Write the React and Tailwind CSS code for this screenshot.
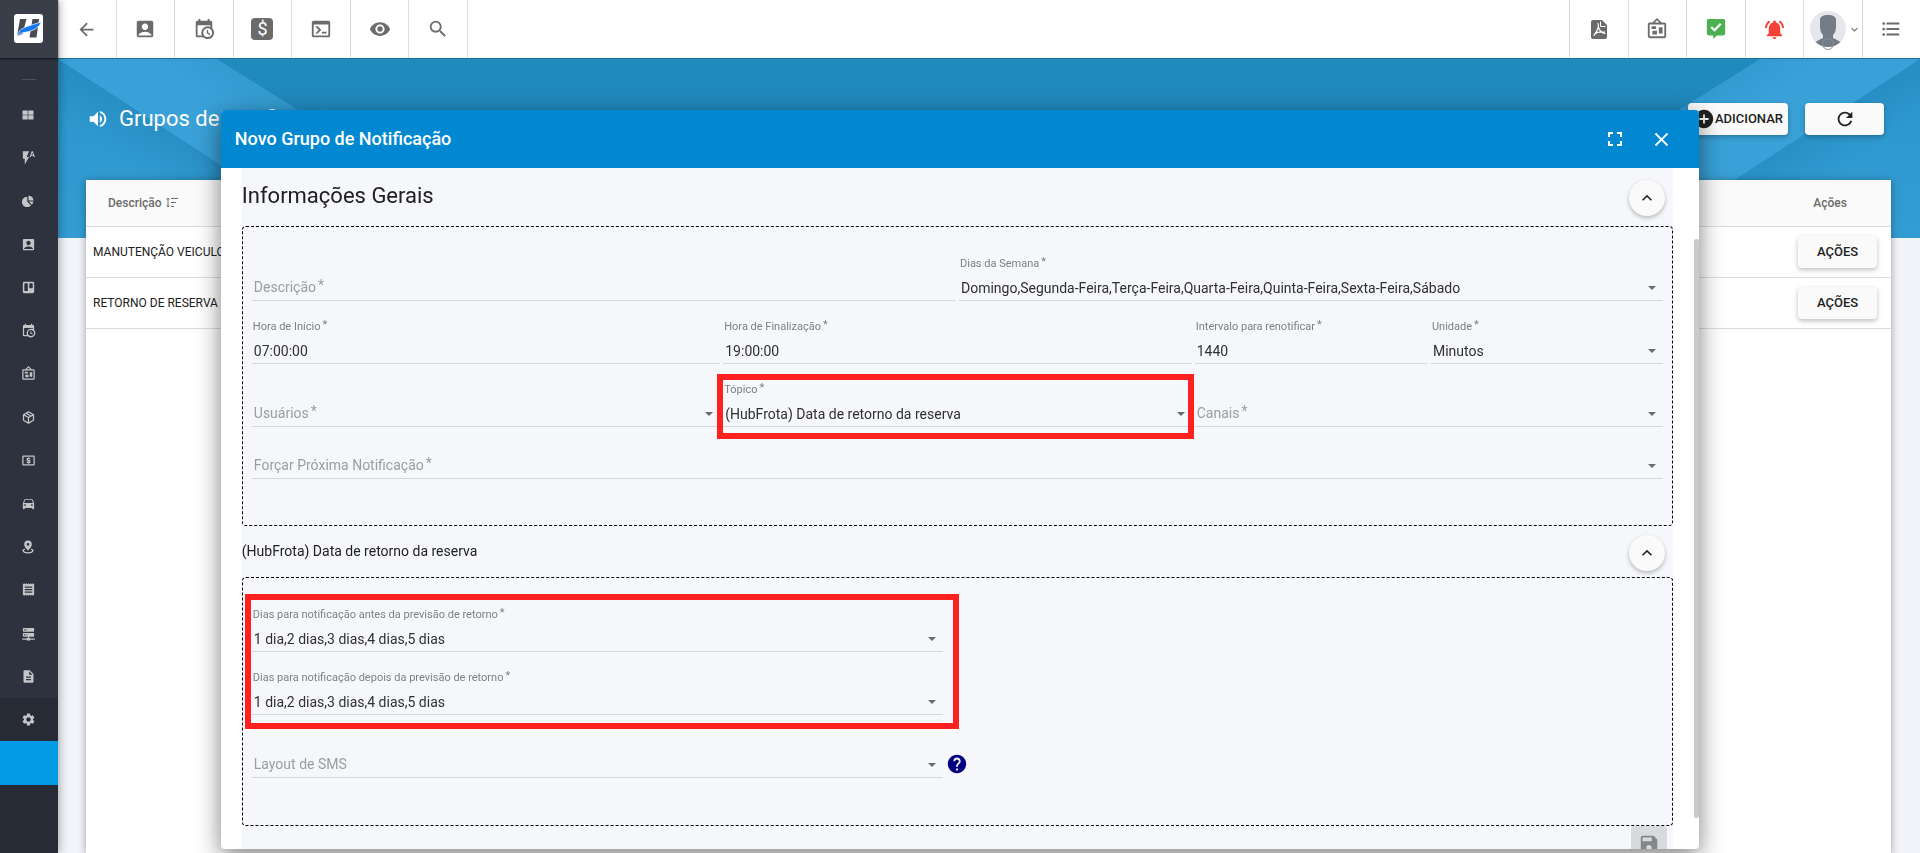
import React from "react";
import {
  MdArrowBack, MdAccountBox, MdVisibility, MdSearch, MdFormatListBulleted, MdFlashAuto,
  MdLocalAtm, MdDirectionsCar, MdReceipt, MdDescription, MdSettings, MdVolumeUp,
  MdAddCircle, MdRefresh, MdFullscreen, MdClose, MdSave, MdHelp, MdNotificationsActive,
  MdKeyboardArrowUp, MdKeyboardArrowDown,
} from "react-icons/md";
import { FaTrello } from "react-icons/fa";

function Glyph({ d, size }) {
  return (
    <svg viewBox="0 0 24 24" width={size} height={size} fill="currentColor" aria-hidden="true">
      <path d={d} />
    </svg>
  );
}

const CALENDAR_CLOCK =
  "M15,13H16.5V15.82L18.94,17.23L18.19,18.53L15,16.69V13M19,8H5V19H9.67C9.24,18.09 9,17.07 9,16A7,7 0 0,1 16,9C17.07,9 18.09,9.24 19,9.67V8M5,21C3.89,21 3,20.1 3,19V5C3,3.89 3.89,3 5,3H6V1H8V3H16V1H18V3H19A2,2 0 0,1 21,5V11.1C22.24,12.36 23,14.09 23,16A7,7 0 0,1 16,23C14.09,23 12.36,22.24 11.1,21H5M16,11.15A4.85,4.85 0 0,0 11.15,16C11.15,18.68 13.32,20.85 16,20.85A4.85,4.85 0 0,0 20.85,16C20.85,13.32 18.68,11.15 16,11.15Z";
const BULLETIN =
  "M12.04,2.5L9.53,5H14.53L12.04,2.5M4,7V20H20V7H4M12,0L17,5V5H20A2,2 0 0,1 22,7V20A2,2 0 0,1 20,22H4A2,2 0 0,1 2,20V7A2,2 0 0,1 4,5H7V5L12,0M7,18V14H12V18H7M14,17V10H18V17H14M6,12V9H11V12H6Z";
const PACKAGE =
  "M21,16.5C21,16.88 20.79,17.21 20.47,17.38L12.57,21.82C12.41,21.94 12.21,22 12,22C11.79,22 11.59,21.94 11.43,21.82L3.53,17.38C3.21,17.21 3,16.88 3,16.5V7.5C3,7.12 3.21,6.79 3.53,6.62L11.43,2.18C11.59,2.06 11.79,2 12,2C12.21,2 12.41,2.06 12.57,2.18L20.47,6.62C20.79,6.79 21,7.12 21,7.5V16.5M12,4.15L10.11,5.22L16,8.61L17.96,7.5L12,4.15M6.04,7.5L12,10.85L13.96,9.75L8.08,6.35L6.04,7.5M5,15.91L11,19.29V12.58L5,9.21V15.91M19,15.91V9.21L13,12.58V19.29L19,15.91Z";
const SERVER =
  "M13,19H14A1,1 0 0,1 15,20H22V22H15A1,1 0 0,1 14,23H10A1,1 0 0,1 9,22H2V20H9A1,1 0 0,1 10,19H11V17H4A1,1 0 0,1 3,16V12A1,1 0 0,1 4,11H20A1,1 0 0,1 21,12V16A1,1 0 0,1 20,17H13V19M4,3H20A1,1 0 0,1 21,4V8A1,1 0 0,1 20,9H4A1,1 0 0,1 3,8V4A1,1 0 0,1 4,3M9,7H10V5H9V7M9,15H10V13H9V15M5,5V7H7V5H5M5,13V15H7V13H5Z";
const WINDOWS_GRID = "M1,3H11.4V11.4H1ZM12.6,3H23V11.4H12.6ZM1,12.6H11.4V21H1ZM12.6,12.6H23V21H12.6Z";
const PIE = "M10.5,3.5V13L18,21.2A10.500,10.500 0 1,1 10.5,3.5M13,1.500A10.500,10.500 0 0,1 23,11H13ZM14,13H22.8A10.500,10.500 0 0,1 19.6,19.3Z";
const PIN_RADIUS =
  "M12,1A6.5,6.5 0 0,1 18.5,7.5C18.5,11.6 12,18 12,18C12,18 5.5,11.6 5.5,7.5A6.5,6.5 0 0,1 12,1M12,5A2.4,2.4 0 0,0 9.6,7.4A2.4,2.4 0 0,0 12,9.8A2.4,2.4 0 0,0 14.4,7.4A2.4,2.4 0 0,0 12,5M21.5,18.5C21.5,21.3 17.2,23 12,23C6.8,23 2.5,21.3 2.5,18.5C2.5,16.9 3.9,15.5 6,14.7L7.3,16.4C5.8,17 5,17.7 5,18.4C5,19.7 8,20.8 12,20.8C16,20.8 19,19.7 19,18.4C19,17.7 18.2,17 16.7,16.4L18,14.7C20.1,15.5 21.5,16.9 21.5,18.5Z";
const CONSOLE =
  "M20,19V7H4V19H20M20,3A2,2 0 0,1 22,5V19A2,2 0 0,1 20,21H4A2,2 0 0,1 2,19V5C2,3.89 2.9,3 4,3H20M13,17V15H18V17H13M9.58,13L5.57,9H8.4L11.7,12.3C12.09,12.69 12.09,13.33 11.7,13.72L8.42,17H5.59L9.58,13Z";
const MESSAGE_CHECK =
  "M4,1H20A2,2 0 0,1 22,3V17A2,2 0 0,1 20,19H13L9,23V19H4A2,2 0 0,1 2,17V3A2,2 0 0,1 4,1M10.3,15L18,7.2L16.3,5.5L10.3,11.6L7.6,8.9L5.9,10.6L10.3,15Z";

function Logo() {
  return (
    <svg viewBox="0 0 29 29" width="29" height="29" aria-hidden="true">
      <rect width="29" height="29" rx="3" fill="#fff" />
      <path d="M6 5h6.500L8.500 20 3 22z" fill="#474b52" />
      <path d="M18.500 5H25L22.500 23.500h-7z" fill="#474b52" />
      <path d="M2.500 22.500C5 13.500 12.500 12.500 27.500 8C23.500 16.500 15 17.500 10 18.500C6.500 19.200 4.500 20.500 2.500 22.500z" fill="#1478f5" stroke="#fff" strokeWidth="0.700" />
    </svg>
  );
}

function Dollar() {
  return (
    <span className="flex h-[22px] w-[22px] items-center justify-center rounded-[4px] bg-[#6b6b6b] text-lg leading-none text-white">
      $
    </span>
  );
}

function Pdf() {
  return (
    <svg viewBox="0 0 16 19" width="16" height="19" aria-hidden="true">
      <path d="M2 0h9l5 5v12a2 2 0 0 1-2 2H2a2 2 0 0 1-2-2V2a2 2 0 0 1 2-2z" fill="#6b6b6b" />
      <path d="M9.500 1.500v5h5" fill="none" stroke="#fff" />
      <path d="M7 3.500C8.500 6 7.500 9 3 15.500M7.200 6.500C8 10 10 12.500 14 13.500M3.500 14C7 11.500 10 11.500 13.500 12" fill="none" stroke="#fff" strokeWidth="1.200" strokeLinecap="round" />
    </svg>
  );
}

function Avatar() {
  return (
    <svg viewBox="0 0 36 40" width="36" height="40" aria-hidden="true">
      <defs>
        <clipPath id="face"><circle cx="18" cy="18" r="18" /></clipPath>
      </defs>
      <circle cx="18" cy="18" r="18" fill="#e5e7ec" />
      <g clipPath="url(#face)" fill="#747c86">
        <path d="M10 9C10 5.500 13 4 18 4s8 1.500 8 5v7c0 3-1 6-3 8V27c3 1.500 6 2.500 9 5v6H4v-6c3-2.500 6-3.500 9-5v-3C11 22 10 19 10 16z" />
      </g>
      <circle cx="18" cy="33" r="5.500" fill="none" stroke="#8b9098" />
    </svg>
  );
}

function SortIcon() {
  return (
    <svg viewBox="0 0 12 11" width="12" height="11" fill="none" stroke="#6b6b6b" aria-hidden="true">
      <path d="M2 1v9M0.500 2.500L2 1l1.500 1.500M0.500 8.500L2 10l1.500-1.500M5 1.500h7M5 5.500h5M5 9.500h3" />
    </svg>
  );
}

const sideItems = [
  ["Painel", <Glyph d={WINDOWS_GRID} size={12} />],
  ["Ações rápidas", <MdFlashAuto size={15} />],
  ["Relatórios", <Glyph d={PIE} size={12} />],
  ["Contatos", <MdAccountBox size={15} />],
  ["Quadros", <FaTrello size={13} />],
  ["Agenda", <Glyph d={CALENDAR_CLOCK} size={15} />],
  ["Mural", <Glyph d={BULLETIN} size={15} />],
  ["Estoque", <Glyph d={PACKAGE} size={15} />],
  ["Financeiro", <MdLocalAtm size={15} />],
  ["Veículos", <MdDirectionsCar size={15} />],
  ["Rastreamento", <Glyph d={PIN_RADIUS} size={14} />],
  ["Recibos", <MdReceipt size={15} />],
  ["Servidores", <Glyph d={SERVER} size={15} />],
  ["Documentos", <MdDescription size={15} />],
];

function Sidebar() {
  return (
    <aside className="z-10 flex w-[58px] shrink-0 flex-col bg-[#2d323e] shadow-[0_0_10px_rgba(0,0,0,0.4)]">
      <a href="#inicio" aria-label="Início" className="flex h-[58px] shrink-0 items-start bg-[#3a3e49] pt-3.5 pl-3.5 shadow-[0_1px_2px_rgba(0,0,0,0.6)]">
        <Logo />
      </a>
      <div className="flex h-[35px] shrink-0 justify-center pt-[21px]">
        <span className="h-px w-3.5 bg-[#4d525d]" />
      </div>
      <nav className="flex grow flex-col text-[#c3c5c9]">
        <div className="grid h-[605px] shrink-0 grid-rows-14">
          {sideItems.map(([name, icon]) => (
            <button key={name} type="button" aria-label={name} className="flex items-center justify-center pr-0.5">
              {icon}
            </button>
          ))}
        </div>
        <div className="flex grow flex-col bg-[#272b35]">
          <button type="button" aria-label="Configurações" className="flex h-[43px] items-center justify-center pr-0.5">
            <MdSettings size={15} />
          </button>
          <a href="#grupos" aria-label="Grupos de Notificação" className="h-11 bg-[#039be5]" />
        </div>
      </nav>
    </aside>
  );
}

const leftTools = [
  ["Voltar", <MdArrowBack size={21} />],
  ["Conta", <MdAccountBox size={22} />],
  ["Agenda", <Glyph d={CALENDAR_CLOCK} size={22} />],
  ["Financeiro", <Dollar />],
  ["Console", <Glyph d={CONSOLE} size={22} />],
  ["Visualizar", <MdVisibility size={22} />],
  ["Pesquisar", <MdSearch size={22} />],
];
const rightTools = [
  ["PDF", <Pdf />],
  ["Mural", <Glyph d={BULLETIN} size={22} />],
  ["Mensagens", <span className="text-[#4caf50]"><Glyph d={MESSAGE_CHECK} size={22} /></span>],
  ["Alertas", <MdNotificationsActive size={23} color="#f44336" />],
  ["Perfil", <span className="flex items-center gap-0.5 pt-1 pl-1.5"><Avatar /><MdKeyboardArrowDown size={13} className="mb-1" /></span>],
  ["Menu", <MdFormatListBulleted size={22} />],
];

function Toolbar() {
  return (
    <header className="z-[5] flex h-[59px] shrink-0 justify-between border-b border-[#1b6f9c] bg-white text-[#6b6b6b]">
      <div className="grid w-[410px] grid-cols-7">
        {leftTools.map(([name, icon]) => (
          <button key={name} type="button" aria-label={name} className="flex items-center justify-center border-r border-[#dcdcdc]">
            {icon}
          </button>
        ))}
      </div>
      <div className="grid w-[351px] grid-cols-6">
        {rightTools.map(([name, icon]) => (
          <button key={name} type="button" aria-label={name} className="flex items-center justify-center border-l border-[#dcdcdc]">
            {icon}
          </button>
        ))}
      </div>
    </header>
  );
}

function HeroArt() {
  return (
    <svg className="absolute inset-0 h-full w-full" viewBox="0 0 1862 179" preserveAspectRatio="none" aria-hidden="true">
      <defs>
        <linearGradient id="base" x1="0" y1="0" x2="0" y2="1">
          <stop offset="0" stopColor="#2c96cc" />
          <stop offset="1" stopColor="#339dd3" />
        </linearGradient>
        <linearGradient id="shadeL" gradientUnits="userSpaceOnUse" x1="90" y1="58" x2="62" y2="102">
          <stop offset="0" stopColor="#1f80b4" stopOpacity="0.400" />
          <stop offset="1" stopColor="#1f80b4" stopOpacity="0" />
        </linearGradient>
        <linearGradient id="shadeR" gradientUnits="userSpaceOnUse" x1="1772" y1="58" x2="1800" y2="102">
          <stop offset="0" stopColor="#1f80b4" stopOpacity="0.400" />
          <stop offset="1" stopColor="#1f80b4" stopOpacity="0" />
        </linearGradient>
        <linearGradient id="bandL" gradientUnits="userSpaceOnUse" x1="90" y1="58" x2="150" y2="-36">
          <stop offset="0.450" stopColor="#39a1d7" />
          <stop offset="1" stopColor="#2f97cc" />
        </linearGradient>
        <linearGradient id="bandR" gradientUnits="userSpaceOnUse" x1="1772" y1="58" x2="1712" y2="-36">
          <stop offset="0.450" stopColor="#39a1d7" />
          <stop offset="1" stopColor="#2f97cc" />
        </linearGradient>
      </defs>
      <rect width="1862" height="179" fill="url(#base)" />
      <path d="M0 0L275 179H0z" fill="url(#shadeL)" />
      <path d="M1862 0L1587 179H1862z" fill="url(#shadeR)" />
      <path d="M0 0H159L445 179H275z" fill="url(#bandL)" />
      <path d="M1862 0H1702L1416 179H1587z" fill="url(#bandR)" />
      <path d="M159 0H1702L1416 179H445z" fill="#2089be" />
    </svg>
  );
}

const raised = "rounded-[4px] bg-[#fafafa] font-medium text-[#212121] shadow-[0_2px_5px_rgba(0,0,0,0.26)]";

function Page() {
  return (
    <main className="relative flex grow flex-col bg-[#f2f4f9]">
      <div className="absolute inset-x-0 top-0 h-[179px]">
        <HeroArt />
      </div>
      <div className="relative flex h-[121px] shrink-0 items-center justify-between pr-9 pb-0.5 pl-[29px] text-white">
        <h1 className="flex items-center gap-2.5 text-[22px]">
          <MdVolumeUp size={22} />
          Grupos de Notificação
        </h1>
        <div className="flex gap-[17px]">
          <button type="button" className={`flex h-8 w-[100px] items-center justify-end pr-[5px] text-[13px] ${raised}`}>
            <MdAddCircle size={22} />
            ADICIONAR
          </button>
          <button type="button" aria-label="Atualizar" className={`flex h-8 w-[79px] items-center justify-center ${raised}`}>
            <MdRefresh size={22} />
          </button>
        </div>
      </div>
      <section className="relative mr-[29px] ml-7 grow bg-white shadow-[0_1px_8px_rgba(0,0,0,0.35)]">
        <table className="w-full text-xs text-[#212121]">
          <thead>
            <tr className="h-[46px] border-b border-[#dcdcdc] bg-[#fafafa] text-left text-[#6b6b6b]">
              <th className="pl-[22px] font-medium">
                <span className="flex items-center gap-1">Descrição <SortIcon /></span>
              </th>
              <th className="w-[122px] text-center font-medium">Ações</th>
            </tr>
          </thead>
          <tbody>
            {["MANUTENÇÃO VEICULO", "RETORNO DE RESERVA"].map((name) => (
              <tr key={name} className="h-[51px] border-b border-[#dcdcdc]">
                <td className="pl-[7px]">{name}</td>
                <td className="pl-[29px]">
                  <button type="button" className={`h-8 w-[79px] text-[13px] ${raised}`}>AÇÕES</button>
                </td>
              </tr>
            ))}
          </tbody>
        </table>
      </section>
    </main>
  );
}

function Star() {
  return <span className="relative -top-0.5 pl-0.5" aria-hidden="true">*</span>;
}

function Arrow() {
  return (
    <svg viewBox="0 0 8 4" width="8" height="4" className="pointer-events-none col-start-1 row-start-1 mr-[7px] self-center justify-self-end" aria-hidden="true">
      <path d="M0 0h8L4 4z" fill="#6b6b6b" />
    </svg>
  );
}

function Field({ id, label, value, select, required = true }) {
  const text = "col-start-1 row-start-1 h-5 w-full appearance-none bg-transparent pl-0.5 text-sm leading-5 text-[#303030] outline-none";
  const empty = value === undefined;
  return (
    <div className="grid grow border-b border-[#d5d7db] pb-0.5">
      {!empty && (
        <label htmlFor={id} className="mb-1.5 h-4 pl-px text-[11px] leading-4 text-[#7f8083]">
          {label}
          {required && <Star />}
        </label>
      )}
      <div className="grid">
        {select ? (
          <select id={id} className={text} defaultValue={value ?? ""}>
            <option>{value ?? ""}</option>
          </select>
        ) : (
          <input id={id} type="text" className={text} defaultValue={value ?? ""} />
        )}
        {empty && (
          <label htmlFor={id} className="pointer-events-none col-start-1 row-start-1 pl-0.5 text-sm leading-[18px] text-[#9c9da0]">
            {label}
            {required && <Star />}
          </label>
        )}
        {select && <Arrow />}
      </div>
    </div>
  );
}

function Collapse({ name }) {
  return (
    <button type="button" aria-label={name} className="mr-2 flex h-9 w-9 items-center justify-center rounded-full bg-[#fafafa] text-[#212121] shadow-[0_2px_4px_rgba(0,0,0,0.26)]">
      <MdKeyboardArrowUp size={20} />
    </button>
  );
}

const panel = "rounded-[4px] border border-dashed border-black px-[9px] pt-[29px]";

function Dialog() {
  return (
    <div className="fixed inset-0 z-20 flex justify-center pt-[110px] pb-1">
      <div role="dialog" aria-labelledby="dlg-title" className="relative flex w-[77%] flex-col overflow-hidden rounded-[4px] bg-white shadow-[0_7px_25px_rgba(0,0,0,0.5)]">
        <div className="flex h-[58px] shrink-0 items-center justify-between bg-[#0288d1] pr-[26px] pl-3.5 text-white">
          <h2 id="dlg-title" className="text-lg font-medium">Novo Grupo de Notificação</h2>
          <div className="flex gap-[23px]">
            <button type="button" aria-label="Tela cheia"><MdFullscreen size={24} /></button>
            <button type="button" aria-label="Fechar"><MdClose size={23} /></button>
          </div>
        </div>
        <div className="grow overflow-hidden pr-[26px] pl-[21px]">
          <form className="bg-[#f5f7fb]">
            <div className="flex h-[58px] items-center justify-between">
              <h3 className="pb-1 text-[22px] text-[#212121]">Informações Gerais</h3>
              <div className="pt-0.5"><Collapse name="Recolher informações gerais" /></div>
            </div>
            <div className={`flex h-[300px] flex-col gap-[18px] ${panel}`}>
              <div className="grid grid-cols-2 items-end gap-[3px]">
                <Field id="descricao" label="Descrição" />
                <Field id="dias" label="Dias da Semana" select value="Domingo,Segunda-Feira,Terça-Feira,Quarta-Feira,Quinta-Feira,Sexta-Feira,Sábado" />
              </div>
              <div className="grid grid-cols-3 gap-[3px]">
                <Field id="inicio" label="Hora de Início" value="07:00:00" />
                <Field id="fim" label="Hora de Finalização" value="19:00:00" />
                <div className="grid grid-cols-2 gap-1">
                  <Field id="intervalo" label="Intervalo para renotificar" value="1440" />
                  <Field id="unidade" label="Unidade" select value="Minutos" />
                </div>
              </div>
              <div className="grid grid-cols-3 items-end gap-[3px]">
                <Field id="usuarios" label="Usuários" select />
                <div className="relative flex">
                  <Field id="topico" label="Tópico" select value="(HubFrota) Data de retorno da reserva" />
                  <span className="pointer-events-none absolute -top-2 -right-0.5 -bottom-3 -left-1.5 border-[6px] border-[#ff2020]" />
                </div>
                <Field id="canais" label="Canais" select />
              </div>
              <div className="flex pt-[11px]">
                <Field id="forcar" label="Forçar Próxima Notificação" select />
              </div>
            </div>
            <div className="flex h-[51px] items-center justify-between">
              <h3 className="pb-0.5 text-sm text-[#212121]">(HubFrota) Data de retorno da reserva</h3>
              <div className="pt-0.5"><Collapse name="Recolher data de retorno da reserva" /></div>
            </div>
            <div className={`h-[249px] ${panel}`}>
              <div className="relative flex w-[49%] flex-col gap-[18px]">
                <Field id="antes" label="Dias para notificação antes da previsão de retorno" select value="1 dia,2 dias,3 dias,4 dias,5 dias" />
                <Field id="depois" label="Dias para notificação depois da previsão de retorno" select value="1 dia,2 dias,3 dias,4 dias,5 dias" />
                <span className="pointer-events-none absolute -top-[13px] -right-4 -bottom-3.5 -left-[7px] border-[6px] border-[#ff2020]" />
              </div>
              <div className="flex items-start gap-[3px] pt-10">
                <div className="flex w-[49%]">
                  <Field id="sms" label="Layout de SMS" select required={false} />
                </div>
                <button type="button" aria-label="Ajuda" className="-mt-0.5 text-[#000080]">
                  <MdHelp size={22} />
                </button>
              </div>
            </div>
            <div className="flex justify-end pr-1.5">
              <button type="button" aria-label="Salvar" disabled className="flex h-9 w-9 items-center justify-center rounded-[4px] bg-[#d8dade] text-[#858688]">
                <MdSave size={22} />
              </button>
            </div>
          </form>
        </div>
        <span className="absolute top-[129px] right-0 bottom-[31px] w-[5px] rounded-[2px] bg-[#cacaca]" />
      </div>
    </div>
  );
}

export default function App() {
  return (
    <div className="flex h-screen overflow-hidden font-['Roboto',sans-serif]">
      <Sidebar />
      <div className="flex min-w-0 grow flex-col">
        <Toolbar />
        <Page />
      </div>
      <Dialog />
    </div>
  );
}
